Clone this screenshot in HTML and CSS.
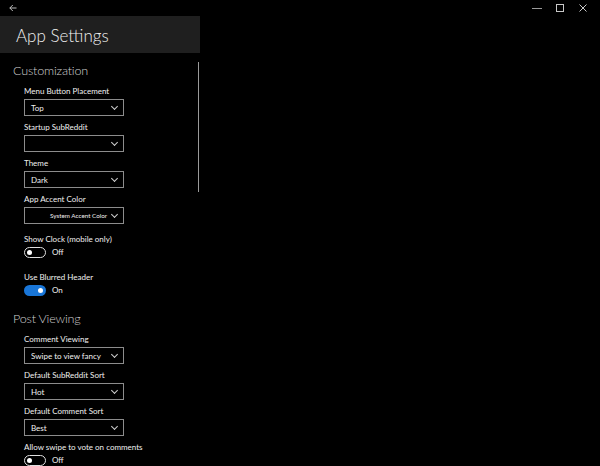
FILE: index.html
```html
<!DOCTYPE html>
<html>
<head>
<meta charset="utf-8">
<link rel="stylesheet" href="styles.css">
</head>
<body>
<div class="window">
  <div class="titlebar">
    <div class="back">
      <svg width="8" height="8" viewBox="0 0 8 8"><path d="M7.5 4H0.8M3.8 1L0.8 4L3.8 7" fill="none" stroke="#cfcfcf" stroke-width="0.9"/></svg>
    </div>
    <div class="controls">
      <span class="ctl"><svg width="10" height="10" viewBox="0 0 10 10"><path d="M0 5.5H10" stroke="#9a9a9a" stroke-width="1"/></svg></span>
      <span class="ctl"><svg width="10" height="10" viewBox="0 0 10 10"><rect x="1.5" y="1.5" width="7" height="7" fill="none" stroke="#c8c8c8" stroke-width="1"/></svg></span>
      <span class="ctl"><svg width="10" height="10" viewBox="0 0 10 10"><path d="M1.5 1.5L8.5 8.5M8.5 1.5L1.5 8.5" stroke="#c8c8c8" stroke-width="1"/></svg></span>
    </div>
  </div>
  <div class="page">
    <div class="pane">
      <div class="header"><h1>App Settings</h1></div>
      <div class="scrollarea">
        <div class="content">
          <h2>Customization</h2>
          <div class="setting">
            <div class="label">Menu Button Placement</div>
            <div class="combo"><span>Top</span><i class="chev"></i></div>
          </div>
          <div class="setting">
            <div class="label">Startup SubReddit</div>
            <div class="combo"><span></span><i class="chev"></i></div>
          </div>
          <div class="setting">
            <div class="label">Theme</div>
            <div class="combo"><span>Dark</span><i class="chev"></i></div>
          </div>
          <div class="setting">
            <div class="label">App Accent Color</div>
            <div class="combo accent"><span>System Accent Color</span><i class="chev"></i></div>
          </div>
          <div class="setting toggle-setting first-toggle">
            <div class="label">Show Clock (mobile only)</div>
            <div class="toggle-row"><span class="toggle off"><b></b></span><span class="state">Off</span></div>
          </div>
          <div class="setting toggle-setting">
            <div class="label">Use Blurred Header</div>
            <div class="toggle-row"><span class="toggle on"><b></b></span><span class="state">On</span></div>
          </div>
          <h2 class="second">Post Viewing</h2>
          <div class="setting">
            <div class="label">Comment Viewing</div>
            <div class="combo"><span>Swipe to view fancy</span><i class="chev"></i></div>
          </div>
          <div class="setting">
            <div class="label">Default SubReddit Sort</div>
            <div class="combo"><span>Hot</span><i class="chev"></i></div>
          </div>
          <div class="setting">
            <div class="label">Default Comment Sort</div>
            <div class="combo"><span>Best</span><i class="chev"></i></div>
          </div>
          <div class="setting toggle-setting">
            <div class="label">Allow swipe to vote on comments</div>
            <div class="toggle-row"><span class="toggle off"><b></b></span><span class="state">Off</span></div>
          </div>
        </div>
        <div class="scrollbar"></div>
      </div>
    </div>
  </div>
</div>
</body>
</html>
```
FILE: styles.css
```css
html, body {
  margin: 0;
  padding: 0;
  background: #000;
}
body {
  width: 600px;
  height: 466px;
  overflow: hidden;
  font-family: Lato, "Open Sans", sans-serif;
  color: #e8e8e8;
}
.window {
  display: flex;
  flex-direction: column;
  height: 466px;
}
.titlebar {
  height: 16px;
  display: flex;
  justify-content: space-between;
  align-items: center;
}
.back {
  width: 8px;
  height: 8px;
  margin-left: 9px;
  display: flex;
}
.controls {
  display: flex;
  margin-right: 6px;
}
.ctl {
  width: 23px;
  height: 16px;
  display: flex;
  align-items: center;
  justify-content: center;
}
.page {
  display: flex;
  flex: 1;
  min-height: 0;
}
.pane {
  width: 200px;
  display: flex;
  flex-direction: column;
}
.header {
  height: 37px;
  background: #1f1f1f;
  display: flex;
  align-items: center;
}
h1 {
  margin: 2px 0 0 16px;
  font-weight: 300;
  font-size: 17px;
  color: #f0f0f0;
}
.scrollarea {
  display: flex;
  flex: 1;
  min-height: 0;
}
.content {
  flex: 1;
  padding-top: 8px;
}
.scrollbar {
  width: 1px;
  height: 130px;
  margin-top: 9px;
  margin-right: 1px;
  background: #9a9a9a;
}
h2 {
  margin: 0 0 4px 13px;
  font-weight: 300;
  font-size: 12.6px;
  letter-spacing: -0.2px;
  line-height: 20px;
  color: #cfcfcf;
}
h2.second {
  margin-top: 12px;
}
.setting {
  margin-left: 24px;
  margin-bottom: 5px;
}
.label {
  font-size: 8px;
  line-height: 12px;
  margin-bottom: 2px;
  color: #f0f0f0;
}
.combo {
  width: 98px;
  height: 15px;
  border: 1px solid #8c8c8c;
  display: flex;
  align-items: center;
  justify-content: space-between;
  padding: 0;
  box-sizing: content-box;
}
.combo span {
  font-size: 8px;
  margin-left: 6px;
  color: #f0f0f0;
}
.combo.accent span {
  font-size: 6.3px;
  margin-left: 25px;
}
.chev {
  width: 4px;
  height: 4px;
  border-right: 1px solid #cfcfcf;
  border-bottom: 1px solid #cfcfcf;
  transform: rotate(45deg);
  margin-right: 6px;
  margin-top: -3px;
}
.first-toggle {
  margin-top: 9px;
}
.toggle-setting .label {
  margin-bottom: 1px;
}
.toggle-row {
  display: flex;
  align-items: center;
  height: 12px;
  margin-bottom: 13px;
}
.toggle {
  width: 22px;
  height: 11px;
  border-radius: 6px;
  box-sizing: border-box;
  display: flex;
  align-items: center;
  padding: 0 2px;
}
.toggle b {
  width: 5px;
  height: 5px;
  border-radius: 50%;
  background: #fff;
}
.toggle.off {
  border: 1px solid #e0e0e0;
}
.toggle.on {
  background: #1976d8;
  justify-content: flex-end;
  padding: 0 3px;
}
.state {
  font-size: 8px;
  margin-left: 6px;
  color: #f0f0f0;
}
```
